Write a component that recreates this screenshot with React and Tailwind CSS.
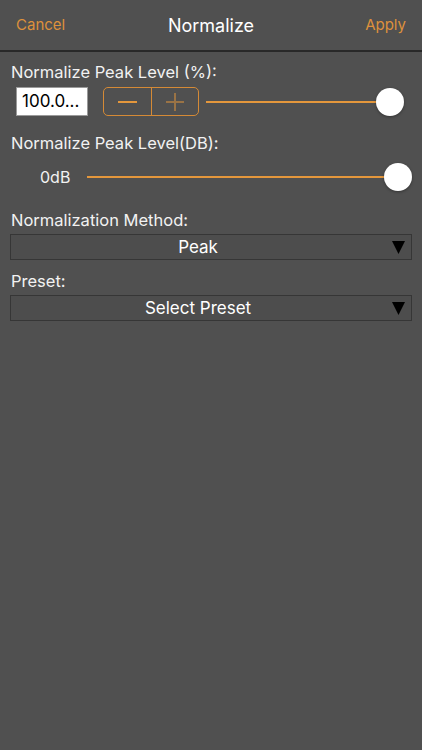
import React from "react";

const font = { fontFamily: "Inter, 'Noto Sans', sans-serif" };

function Thumb() {
  return <div className="w-[28px] h-[28px] rounded-full bg-white shadow-[0_1px_3px_rgba(0,0,0,0.35)] shrink-0" />;
}

function Slider({ className }) {
  return (
    <div className={"flex items-center " + className}>
      <div className="flex-1 h-[2px] bg-[#e4973c]" />
      <Thumb />
    </div>
  );
}

function Dropdown({ label }) {
  return (
    <div className="relative mx-[10px] h-[26px] border border-[#363636] bg-[#4d4d4d] flex items-center justify-center pr-[26px]">
      <span className="text-[17px] text-white leading-none">{label}</span>
      <svg className="absolute right-[6px] top-[6px]" width="13" height="13" viewBox="0 0 13 13">
        <polygon points="0,0 13,0 6.5,13" fill="#000" />
      </svg>
    </div>
  );
}

export default function App() {
  return (
    <div className="w-[422px] h-[750px] bg-[#505050] overflow-hidden" style={font}>
      <div className="h-[52px] border-b-2 border-[#282828] flex items-center justify-between px-[16px] relative">
        <span className="text-[15px] text-[#dd913c]">Cancel</span>
        <span className="absolute left-0 right-0 text-center text-[18px] text-white pointer-events-none">Normalize</span>
        <span className="text-[15px] text-[#dd913c]">Apply</span>
      </div>

      <div className="pt-[10px] px-[11px] text-[16.5px] leading-[20px] text-[#f2f2f2]">Normalize Peak Level (%):</div>
      <div className="mt-[5px] flex items-center pl-[16px] pr-[18px] h-[29px]">
        <div className="w-[72px] h-[29px] bg-white border border-[#9a9a9a] flex items-center pl-[5px] text-[17px] text-black">100.0...</div>
        <div className="ml-[15px] w-[96px] h-[29px] border border-[#d58a36] rounded-[5px] flex">
          <div className="flex-1 flex items-center justify-center border-r border-[#d58a36]">
            <div className="w-[19px] h-[2px] bg-[#e4973c]" />
          </div>
          <div className="flex-1 flex items-center justify-center opacity-50">
            <svg width="18" height="18" viewBox="0 0 18 18">
              <rect x="0" y="8" width="18" height="2" fill="#e4973c" />
              <rect x="8" y="0" width="2" height="18" fill="#e4973c" />
            </svg>
          </div>
        </div>
        <Slider className="flex-1 ml-[7px]" />
      </div>

      <div className="mt-[17px] px-[11px] text-[16.5px] leading-[20px] text-[#f2f2f2]">Normalize Peak Level(DB):</div>
      <div className="mt-[10px] flex items-center pl-[40px] pr-[10px] h-[28px]">
        <span className="text-[16px] text-[#f2f2f2] w-[47px]">0dB</span>
        <Slider className="flex-1" />
      </div>

      <div className="mt-[19px] px-[11px] text-[16.5px] leading-[20px] text-[#f2f2f2]">Normalization Method:</div>
      <div className="mt-[4px]">
        <Dropdown label="Peak" />
      </div>

      <div className="mt-[11px] px-[11px] text-[16.5px] leading-[20px] text-[#f2f2f2]">Preset:</div>
      <div className="mt-[4px]">
        <Dropdown label="Select Preset" />
      </div>
    </div>
  );
}
